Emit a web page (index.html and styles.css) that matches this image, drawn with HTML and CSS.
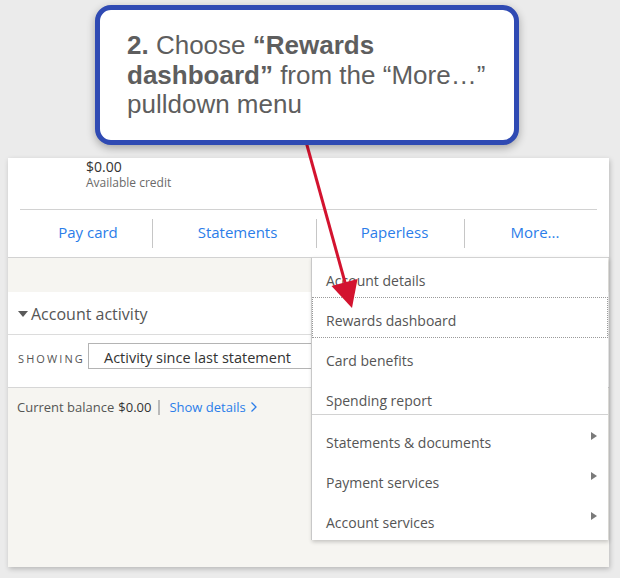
FILE: index.html
```html
<!DOCTYPE html>
<html>
<head>
<meta charset="utf-8">
<link rel="stylesheet" href="styles.css">
</head>
<body>
<div class="stage">
  <div class="card">
    <div class="summary">
      <div class="amount">$0.00</div>
      <div class="amount-label">Available credit</div>
    </div>
    <div class="actions-wrap">
      <nav class="actions">
        <a class="action col1">Pay card</a>
        <span class="sep"></span>
        <a class="action col2">Statements</a>
        <span class="sep"></span>
        <a class="action col3">Paperless</a>
        <span class="sep"></span>
        <a class="action col4">More...</a>
      </nav>
    </div>
    <div class="body">
      <div class="spacer"></div>
      <div class="activity-head"><span class="tri-down"></span>Account activity</div>
      <div class="showing-row">
        <span class="showing">SHOWING</span>
        <div class="select">Activity since last statement</div>
      </div>
      <div class="balance-row">
        <span class="bal-label">Current balance</span>
        <span class="bal-value">$0.00</span>
        <span class="bal-sep"></span>
        <a class="show-details">Show details
          <svg class="chev" width="8" height="12" viewBox="0 0 8 12"><polyline points="1.5,1.5 6,6 1.5,10.5" fill="none" stroke="#2b7de9" stroke-width="1.3"/></svg>
        </a>
      </div>
    </div>
  </div>

  <div class="menu">
    <div class="menu-group first">
      <div class="menu-item">Account details</div>
      <div class="menu-item focused">Rewards dashboard</div>
      <div class="menu-item">Card benefits</div>
      <div class="menu-item">Spending report</div>
    </div>
    <div class="menu-group second">
      <div class="menu-item sub"><span>Statements &amp; documents</span><span class="tri-right"></span></div>
      <div class="menu-item sub"><span>Payment services</span><span class="tri-right"></span></div>
      <div class="menu-item sub"><span>Account services</span><span class="tri-right"></span></div>
    </div>
  </div>

  <svg class="pointer" width="620" height="578" viewBox="0 0 620 578">
    <line x1="305" y1="138" x2="346" y2="286" stroke="#d3132f" stroke-width="3"/>
    <polygon points="352,308 331.5,286 357.5,279" fill="#d3132f"/>
  </svg>

  <div class="callout">
    <b>2.</b> Choose <b>“Rewards dashboard”</b> from the “More…” pulldown menu
  </div>
</div>
</body>
</html>
```
FILE: styles.css
```css
html, body {
  margin: 0;
  padding: 0;
}
body {
  background: #ebebeb;
  width: 620px;
  height: 578px;
  overflow: hidden;
  font-family: "Open Sans", "DejaVu Sans", sans-serif;
}
.stage {
  position: relative;
  width: 620px;
  height: 578px;
  box-sizing: border-box;
  padding: 158px 0 0 8px;
}
.card {
  width: 601px;
  height: 409px;
  background: #ffffff;
  box-shadow: 1px 2px 5px rgba(0, 0, 0, 0.22);
  display: flex;
  flex-direction: column;
  overflow: hidden;
}
.summary {
  height: 51px;
  padding-left: 78px;
  box-sizing: border-box;
}
.amount {
  font-size: 14px;
  line-height: 18px;
  color: #333;
}
.amount-label {
  font-size: 12px;
  line-height: 14px;
  color: #6a6a6a;
}
.actions-wrap {
  border-bottom: 1px solid #d2d2d2;
}
.actions {
  margin: 0 12px;
  border-top: 1px solid #d2d2d2;
  height: 47px;
  display: flex;
  align-items: center;
}
.action {
  flex: none;
  text-align: center;
  font-size: 15px;
  color: #2b7de9;
  padding-left: 6px;
  box-sizing: border-box;
  line-height: 20px;
  padding-bottom: 4px;
}
.col1 { width: 132px; padding-left: 4px; }
.col2 { width: 163px; }
.col3 { width: 147px; padding-left: 8px; }
.col4 { width: 132px; padding-left: 8px; }
.sep {
  flex: none;
  width: 1px;
  height: 29px;
  background: #c6c6c6;
}
.body {
  flex: 1;
  background: #f6f5f1;
}
.spacer {
  height: 34px;
}
.activity-head {
  box-sizing: border-box;
  padding-top: 1px;
  background: #fff;
  border-bottom: 1px solid #dcdcdc;
  display: flex;
  align-items: center;
  padding-left: 10px;
  font-size: 16px;
  color: #555;
  gap: 3px;
  height: 43px;
}
.tri-down {
  width: 0;
  height: 0;
  border-left: 5px solid transparent;
  border-right: 5px solid transparent;
  border-top: 6px solid #5a5a5a;
  margin-top: 1px;
}
.showing-row {
  background: #fff;
  border-bottom: 1px solid #d6d6d6;
  display: flex;
  align-items: flex-start;
  padding: 8px 0 0 10px;
  height: 44px;
}
.showing {
  font-size: 11px;
  letter-spacing: 2.1px;
  color: #555;
  line-height: 26px;
  padding-top: 3px;
  width: 70px;
}
.select {
  height: 26px;
  box-sizing: border-box;
  width: 300px;
  border: 1px solid #b4b4b4;
  padding-left: 15px;
  font-size: 14.5px;
  line-height: 27px;
  color: #333;
  overflow: hidden;
}
.balance-row {
  padding: 10px 0 0 9px;
  display: flex;
  align-items: center;
  font-size: 13px;
  line-height: 18px;
  color: #555;
}
.bal-value {
  color: #333;
  margin-left: 4px;
}
.bal-sep {
  width: 2px;
  height: 15px;
  background: #b9b9b9;
  margin: 0 9px 0 7px;
}
.show-details {
  color: #2b7de9;
  display: flex;
  align-items: center;
  gap: 4px;
}
.chev {
  display: block;
}
.menu {
  position: absolute;
  left: 311px;
  top: 257px;
  width: 297px;
  background: #fff;
  border-top: 1px solid #d2d2d2;
  border-left: 1px solid #c8c8c8;
  box-sizing: border-box;
  box-shadow: 1px 2px 4px rgba(0, 0, 0, 0.2);
}
.menu-group.first {
  height: 157px;
  border-bottom: 1px solid #d2d2d2;
  box-sizing: border-box;
}
.menu-group.second {
  padding-top: 5px;
}
.menu-item {
  height: 40px;
  box-sizing: border-box;
  padding-top: 4px;
  line-height: 37px;
  padding-left: 14px;
  font-size: 14px;
  color: #555;
}
.menu-item.focused {
  outline: 1px dotted #9a9a9a;
  outline-offset: -1px;
  height: 41px;
  margin-top: -1px;
  padding-top: 5px;
}
.menu-item.sub {
  display: flex;
  justify-content: space-between;
  align-items: flex-start;
  line-height: 38px;
}
.tri-right {
  width: 0;
  height: 0;
  margin-top: 8px;
  margin-right: 11px;
  border-top: 4.5px solid transparent;
  border-bottom: 4.5px solid transparent;
  border-left: 6px solid #7a7a7a;
}
.pointer {
  position: absolute;
  left: 0;
  top: 0;
  pointer-events: none;
}
.callout {
  position: absolute;
  left: 95px;
  top: 5px;
  width: 424px;
  height: 140px;
  box-sizing: border-box;
  background: #fff;
  border: 5px solid #2f4ab3;
  border-radius: 16px;
  box-shadow: 0 3px 8px rgba(0, 0, 0, 0.3);
  padding: 21px 12px 0 27px;
  font-family: "Liberation Sans", Arial, sans-serif;
  font-size: 26px;
  line-height: 29.5px;
  color: #5e5e5e;
}
.callout b {
  font-weight: bold;
}
```
